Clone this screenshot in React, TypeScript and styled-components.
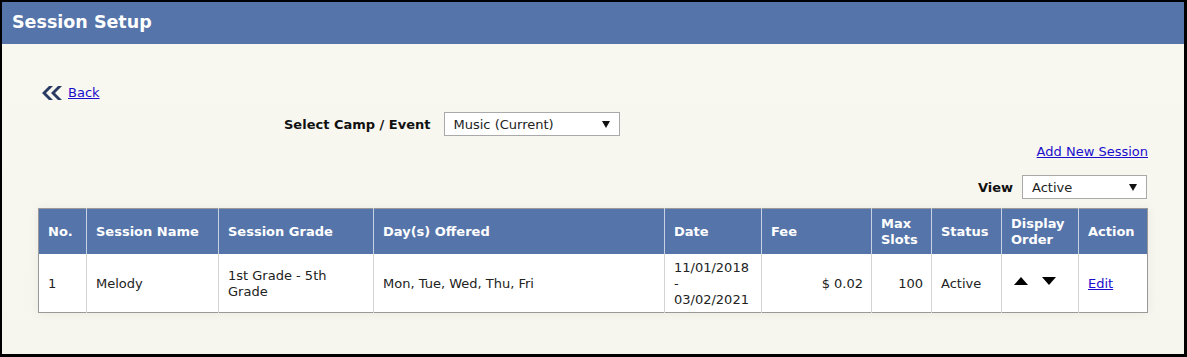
import React from 'react';
import styled, { createGlobalStyle } from 'styled-components';

const GlobalStyle = createGlobalStyle`
  html, body {
    margin: 0;
    padding: 0;
    background: #ffffff;
  }
  body {
    font-family: 'DejaVu Sans', Verdana, sans-serif;
    font-size: 13px;
    color: #222;
  }
`;

const Frame = styled.div`
  box-sizing: border-box;
  width: 1187px;
  height: 357px;
  border-style: solid;
  border-color: #000;
  border-width: 2px 3px 3px 2px;
  background: linear-gradient(180deg, #f8f8f1 0%, #f6f6ee 100%);
  display: flex;
  flex-direction: column;
`;

const TitleBar = styled.header`
  height: 42px;
  background: #5574aa;
  color: #fff;
  display: flex;
  align-items: center;
  padding: 0 0 2px 10px;
  box-sizing: border-box;
  font-size: 17.5px;
  font-weight: bold;
`;

const Content = styled.main`
  padding: 41px 37px 0 36px;
  display: flex;
  flex-direction: column;
`;

const Link = styled.a`
  color: #1a0dcc;
  text-decoration: underline;
  cursor: pointer;
  line-height: 16px;
`;

const BackRow = styled.div`
  display: flex;
  align-items: center;
  gap: 6px;
  margin-left: 4px;
  height: 16px;
`;

const FieldRow = styled.div<{ $indent?: number; $right?: boolean; $top: number; $gap: number }>`
  display: flex;
  align-items: center;
  gap: ${(p) => p.$gap}px;
  margin-top: ${(p) => p.$top}px;
  margin-left: ${(p) => p.$indent ?? 0}px;
  justify-content: ${(p) => (p.$right ? 'flex-end' : 'flex-start')};
`;

const Label = styled.span`
  font-weight: bold;
  color: #111;
`;

const SelectWrap = styled.div<{ $width: number }>`
  position: relative;
  width: ${(p) => p.$width}px;
  height: 24px;
`;

const Select = styled.select`
  appearance: none;
  box-sizing: border-box;
  width: 100%;
  height: 100%;
  border: 1px solid #a9a9a9;
  background: #fff;
  font-family: 'DejaVu Sans', Verdana, sans-serif;
  font-size: 13px;
  color: #222;
  padding: 0 0 0 9px;
  border-radius: 0;
  outline: none;
`;

const Caret = styled.span`
  position: absolute;
  right: 10px;
  top: 9px;
  width: 0;
  height: 0;
  border-left: 4px solid transparent;
  border-right: 4px solid transparent;
  border-top: 7px solid #111;
  pointer-events: none;
`;

const AddRow = styled.div`
  display: flex;
  justify-content: flex-end;
  margin-top: 8px;
  margin-right: -1px;
  height: 16px;
`;

const Table = styled.table`
  margin-top: 9px;
  width: 1109px;
  border-collapse: collapse;
  table-layout: fixed;
  border: 1px solid #999;
  background: #fff;
  box-shadow: 0 0 10px rgba(0, 0, 0, 0.06);
`;

const Th = styled.th`
  background: #5574aa;
  color: #fff;
  font-weight: bold;
  text-align: left;
  padding: 6px 8px 5px 9px;
  height: 45px;
  box-sizing: border-box;
  line-height: 16px;
  border-left: 1px solid #c9d2e3;
  &:first-child {
    border-left: none;
  }
`;

const Td = styled.td<{ $align?: 'left' | 'right' }>`
  text-align: ${(p) => p.$align ?? 'left'};
  padding: 6px 8px 4px 9px;
  line-height: 16px;
  height: 58px;
  box-sizing: border-box;
  color: #222;
  border-left: 1px solid #d4d4d4;
  vertical-align: middle;
  &:first-child {
    border-left: none;
  }
`;

const Arrows = styled.div`
  display: flex;
  gap: 14px;
  padding-left: 3px;
  margin-top: -6px;
`;

const Chevrons = () => (
  <svg width="20" height="14" viewBox="0 0 20 14">
    <path d="M7 0 L0 7 L7 14 L11 14 L4 7 L11 0 Z" fill="#2b3a63" />
    <path d="M16 0 L9 7 L16 14 L20 14 L13 7 L20 0 Z" fill="#2b3a63" />
  </svg>
);

const Tri = ({ up }: { up?: boolean }) => (
  <svg width="14" height="8" viewBox="0 0 14 8">
    <path d={up ? 'M7 0 L14 8 L0 8 Z' : 'M0 0 L14 0 L7 8 Z'} fill="#000" />
  </svg>
);

const cols = [48, 132, 155, 291, 97, 110, 60, 70, 77, 69];

const App = () => (
  <>
    <GlobalStyle />
    <Frame>
      <TitleBar>Session Setup</TitleBar>
      <Content>
        <BackRow>
          <Chevrons />
          <Link>Back</Link>
        </BackRow>
        <FieldRow $top={11} $indent={246} $gap={13}>
          <Label>Select Camp / Event</Label>
          <SelectWrap $width={176}>
            <Select defaultValue="music">
              <option value="music">Music (Current)</option>
            </Select>
            <Caret />
          </SelectWrap>
        </FieldRow>
        <AddRow>
          <Link>Add New Session</Link>
        </AddRow>
        <FieldRow $top={15} $right $gap={9}>
          <Label>View</Label>
          <SelectWrap $width={125}>
            <Select defaultValue="active">
              <option value="active">Active</option>
            </Select>
            <Caret />
          </SelectWrap>
        </FieldRow>
        <Table>
          <colgroup>
            {cols.map((w, i) => (
              <col key={i} style={{ width: w }} />
            ))}
          </colgroup>
          <thead>
            <tr>
              <Th>No.</Th>
              <Th>Session Name</Th>
              <Th>Session Grade</Th>
              <Th>Day(s) Offered</Th>
              <Th>Date</Th>
              <Th>Fee</Th>
              <Th>
                Max
                <br />
                Slots
              </Th>
              <Th>Status</Th>
              <Th>
                Display
                <br />
                Order
              </Th>
              <Th>Action</Th>
            </tr>
          </thead>
          <tbody>
            <tr>
              <Td>1</Td>
              <Td>Melody</Td>
              <Td>1st Grade - 5th Grade</Td>
              <Td>Mon, Tue, Wed, Thu, Fri</Td>
              <Td>
                11/01/2018
                <br />-<br />
                03/02/2021
              </Td>
              <Td $align="right">$ 0.02</Td>
              <Td $align="right">100</Td>
              <Td>Active</Td>
              <Td>
                <Arrows>
                  <Tri up />
                  <Tri />
                </Arrows>
              </Td>
              <Td>
                <Link>Edit</Link>
              </Td>
            </tr>
          </tbody>
        </Table>
      </Content>
    </Frame>
  </>
);

export default App;
